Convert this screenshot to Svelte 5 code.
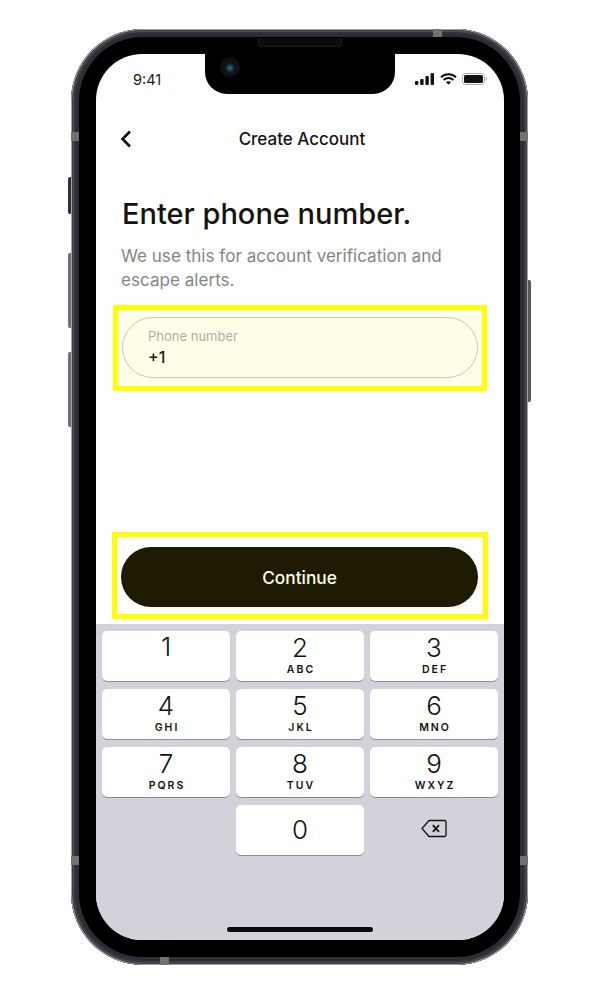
<script>
  const keys = [
    { n: "1", l: "" },
    { n: "2", l: "ABC" },
    { n: "3", l: "DEF" },
    { n: "4", l: "GHI" },
    { n: "5", l: "JKL" },
    { n: "6", l: "MNO" },
    { n: "7", l: "PQRS" },
    { n: "8", l: "TUV" },
    { n: "9", l: "WXYZ" },
  ];
</script>

<main>
  <div class="phone">
    <span class="side mute"></span>
    <span class="side volup"></span>
    <span class="side voldown"></span>
    <span class="side power"></span>
    <span class="band b1"></span>
    <span class="band b2"></span>
    <span class="band b3"></span>
    <span class="band b4"></span>
    <span class="band b5"></span>
    <span class="band b6"></span>

    <div class="bezel">
      <div class="speaker"></div>
      <div class="screen">
        <div class="notch">
          <span class="cam"></span>
        </div>

        <div class="status">
          <span class="time">9:41</span>
          <div class="status-icons">
            <svg width="20" height="12" viewBox="0 0 20 12">
              <rect x="0" y="8" width="3.4" height="4" rx="1" fill="#111" />
              <rect x="5.2" y="6" width="3.4" height="6" rx="1" fill="#111" />
              <rect x="10.4" y="3" width="3.4" height="9" rx="1" fill="#111" />
              <rect x="15.6" y="0" width="3.4" height="12" rx="1" fill="#111" />
            </svg>
            <svg width="17" height="12" viewBox="0 0 17 12" fill="none" stroke="#111" stroke-width="2">
              <path d="M1 4.3C5.2.3 11.8.3 16 4.3" />
              <path d="M3.6 7C6.4 4.4 10.6 4.4 13.4 7" />
              <path d="M8.5 11.6 6 9.2c1.4-1.2 3.6-1.2 5 0z" fill="#111" stroke="none" />
            </svg>
            <svg width="25" height="12" viewBox="0 0 25 12">
              <rect x=".5" y=".5" width="22" height="11" rx="3" fill="none" stroke="#aaa" />
              <rect x="2" y="2" width="19" height="8" rx="1.6" fill="#111" />
              <path d="M23.6 4.2c.8.3 1.2 1 1.2 1.8s-.4 1.500-1.200 1.800z" fill="#aaa" />
            </svg>
          </div>
        </div>

        <header>
          <svg class="back" width="14" height="20" viewBox="0 0 14 20" fill="none" stroke="#111" stroke-width="2.600">
            <path d="M11 2.500 3.500 10 11 17.500" />
          </svg>
          <span>Create Account</span>
        </header>

        <section class="intro">
          <h1>Enter phone number.</h1>
          <p>We use this for account verification and escape alerts.</p>
        </section>

        <div class="mark mark-field">
          <div class="field">
            <label for="phone">Phone number</label>
            <input id="phone" type="text" value="+1" />
          </div>
        </div>

        <div class="mark mark-btn">
          <button type="button">Continue</button>
        </div>

        <div class="keyboard">
          <div class="keys">
            {#each keys as k}
              <div class="key">
                <span class="num" class:solo={!k.l}>{k.n}</span>
                {#if k.l}<span class="letters">{k.l}</span>{/if}
              </div>
            {/each}
            <div></div>
            <div class="key zero"><span class="num">0</span></div>
            <div class="del">
              <svg width="26" height="19" viewBox="0 0 26 19" fill="none" stroke="#111" stroke-width="1.300" stroke-linejoin="round">
                <path d="M8 1.500h15.500a1.500 1.500 0 0 1 1.500 1.500v13a1.500 1.500 0 0 1-1.500 1.500H8L1 9.500z" />
                <path d="M11.800 6.200 18 12.800M18 6.200l-6.200 6.600" stroke-width="1.700" />
              </svg>
            </div>
          </div>
          <div class="home"></div>
        </div>
      </div>
    </div>
  </div>
</main>

<style>
  :global(body) {
    margin: 0;
    background: #fff;
  }
  main {
    width: 596px;
    height: 998px;
    padding-top: 29px;
    box-sizing: border-box;
    font-family: Inter, "Liberation Sans", sans-serif;
    overflow: hidden;
  }
  .phone {
    position: relative;
    width: 457px;
    height: 936px;
    margin-left: 71px;
    box-sizing: border-box;
    border-radius: 72px;
    background: #2b2e32;
    box-shadow:
      inset 0 0 0 1px #a3a5a8,
      inset 0 0 0 2px #3a3d41,
      inset 0 0 0 3px #4d5053,
      inset 0 0 0 5px #30333a;
    padding: 8px;
  }
  .bezel {
    position: relative;
    height: 100%;
    box-sizing: border-box;
    border-radius: 64px;
    background: #000;
    padding: 17px 16px 17px 17px;
  }
  .speaker {
    position: absolute;
    top: 1px;
    left: 179px;
    width: 82px;
    height: 8px;
    border: 1px solid #1c1c1c;
    border-top: 0;
    border-radius: 0 0 4px 4px;
    background: #0b0b0b;
    z-index: 3;
  }
  .screen {
    position: relative;
    height: 100%;
    display: flex;
    flex-direction: column;
    border-radius: 46px;
    background: #fff;
    overflow: hidden;
  }
  .notch {
    position: absolute;
    top: 0;
    left: 109px;
    width: 190px;
    height: 40px;
    background: #000;
    border-radius: 0 0 22px 22px;
  }
  .cam {
    position: absolute;
    top: 3px;
    left: 15px;
    width: 20px;
    height: 20px;
    border-radius: 50%;
    background: radial-gradient(circle at 50% 55%, #2f7a9c 0, #1a3c48 18%, #0e1216 36%, #0b0d11 100%);
  }
  .status {
    height: 52px;
    flex: none;
    display: flex;
    justify-content: space-between;
    align-items: flex-end;
    padding: 0 17px 0 37px;
    box-sizing: border-box;
  }
  .time {
    font-size: 14.500px;
    color: #1a1a1a;
    line-height: 20px;
    margin-bottom: 16px;
  }
  .status-icons {
    display: flex;
    align-items: center;
    gap: 5px;
    margin-bottom: 21px;
  }
  header {
    position: relative;
    height: 36px;
    margin-top: 15px;
    flex: none;
    display: flex;
    align-items: center;
    justify-content: center;
    font-size: 17px;
    font-weight: 500;
    color: #141414;
    padding-left: 4px;
  }
  .back {
    position: absolute;
    left: 23px;
    top: 8px;
  }
  .intro {
    flex: none;
    margin-top: 37px;
    padding: 0 25px;
  }
  h1 {
    margin: 0 0 0 1px;
    font-size: 29px;
    font-weight: 500;
    line-height: 40px;
    color: #14130c;
    white-space: nowrap;
  }
  p {
    margin: 10px 0 0;
    font-size: 17.100px;
    line-height: 24px;
    color: #85857f;
  }
  .mark {
    flex: none;
    border: 5px solid #ff0;
    box-sizing: border-box;
  }
  .mark-field {
    width: 374px;
    height: 86px;
    margin: 13px 0 0 17px;
    padding: 7px 4px;
    background: #fffee9;
  }
  .field {
    height: 61px;
    box-sizing: border-box;
    border: 1px solid #c9c8b4;
    border-radius: 31px;
    padding: 10px 25px;
  }
  label {
    display: block;
    font-size: 13px;
    line-height: 16px;
    color: #aeae9f;
  }
  input {
    display: block;
    width: 100%;
    margin-top: 3px;
    padding: 0;
    border: 0;
    background: none;
    font: 500 16px/20px Inter, "Liberation Sans", sans-serif;
    color: #1f1c08;
    outline: none;
  }
  .mark-btn {
    width: 376px;
    height: 87px;
    margin: 141px 0 0 16px;
    padding: 10px 5px 6px 4px;
  }
  button {
    display: block;
    width: 100%;
    height: 60px;
    border: 0;
    border-radius: 30px;
    background: #1f1b03;
    color: #fffee9;
    font: 500 17.300px Inter, "Liberation Sans", sans-serif;
  }
  .keyboard {
    flex: 1;
    margin-top: 5px;
    position: relative;
    background: #d1d2da;
    padding: 7px 6px 0 6px;
  }
  .keys {
    display: grid;
    grid-template-columns: repeat(3, 128px);
    grid-auto-rows: 50px;
    gap: 8px 6px;
  }
  .key {
    display: flex;
    flex-direction: column;
    align-items: center;
    border-radius: 5px;
    background: #fff;
    box-shadow: 0 1px 0 #8b8c90;
    color: #111;
  }
  .num {
    font-size: 26px;
    font-weight: 300;
    line-height: 30px;
    margin-top: 2px;
  }
  .num.solo {
    margin-top: 1px;
  }
  .zero .num {
    margin-top: 10px;
  }
  .letters {
    font-size: 10.500px;
    font-weight: 600;
    letter-spacing: 2px;
    line-height: 12px;
    margin-top: 1px;
    padding-left: 2px;
  }
  .del {
    display: flex;
    align-items: center;
    justify-content: center;
    padding-bottom: 4px;
  }
  .home {
    position: absolute;
    left: 131px;
    bottom: 8px;
    width: 146px;
    height: 5px;
    border-radius: 3px;
    background: #0a0a0a;
  }
  .side {
    position: absolute;
    width: 3px;
    background: #3d4044;
    border-radius: 2px 0 0 2px;
  }
  .mute { left: -3px; top: 148px; height: 37px; background: #2e3033; }
  .volup { left: -3px; top: 224px; height: 75px; background: #6f7174; }
  .voldown { left: -3px; top: 323px; height: 75px; background: #6f7174; }
  .power { right: -3px; top: 251px; height: 122px; border-radius: 0 2px 2px 0; background: #55575a; }
  .band {
    position: absolute;
    background: #6f7174;
    z-index: 2;
  }
  .b1 { left: 0; top: 103px; width: 8px; height: 9px; }
  .b2 { right: 0; top: 103px; width: 8px; height: 9px; }
  .b3 { left: 0; top: 827px; width: 8px; height: 9px; }
  .b4 { right: 0; top: 827px; width: 8px; height: 9px; }
  .b5 { left: 89px; bottom: 0; width: 9px; height: 8px; }
  .b6 { left: 362px; top: 0; width: 9px; height: 8px; }
</style>
